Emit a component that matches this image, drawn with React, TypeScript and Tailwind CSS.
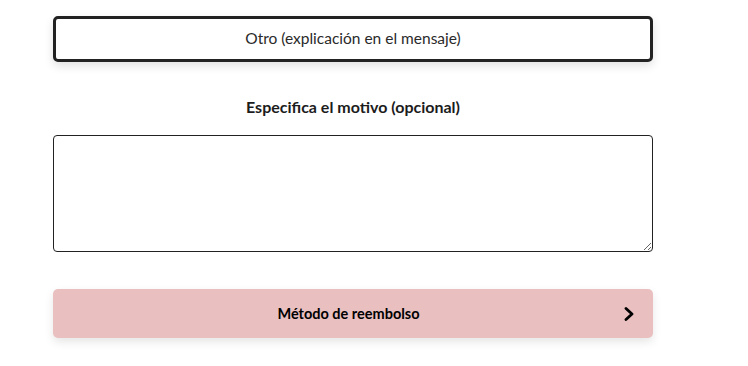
export default function App() {
  return (
    <div className="min-h-[366px] w-[748px] bg-white font-['Lato','Noto_Sans',sans-serif] text-[#1c1c1c]">
      <div className="flex w-[653px] flex-col pl-[53px] pt-4">
        <button className="flex h-[46px] w-[600px] items-center justify-center rounded-[5px] border-[3px] border-[#222] bg-white text-[15.5px] font-normal text-[#2a2a2a] shadow-[0_4px_10px_rgba(0,0,0,0.12)]">
          Otro (explicación en el mensaje)
        </button>

        <label className="mt-[33px] w-[600px] text-center text-[16px] font-bold leading-6">
          Especifica el motivo (opcional)
        </label>

        <textarea className="mt-[16px] h-[117px] w-[600px] rounded-[4px] border border-[#222] bg-white p-2 text-[15px] outline-none" />

        <button className="mt-[37px] flex h-[49px] w-[600px] items-center rounded-[5px] bg-[#e9bfc0] pl-5 pr-[19px] shadow-[0_4px_10px_rgba(0,0,0,0.1)]">
          <span className="flex-1 text-center text-[14.5px] font-bold text-black">Método de reembolso</span>
          <svg width="10" height="14" viewBox="0 0 10 14" fill="none" className="shrink-0">
            <polyline points="2,1.5 8,7 2,12.5" stroke="#000" strokeWidth="2.8" strokeLinecap="round" strokeLinejoin="round" />
          </svg>
        </button>
      </div>
    </div>
  )
}
